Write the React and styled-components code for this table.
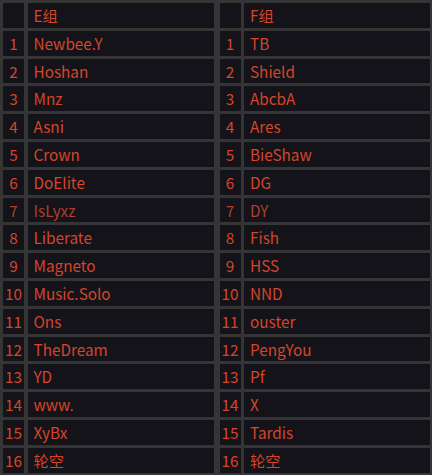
import React from 'react';
import styled, { createGlobalStyle } from 'styled-components';

const GlobalStyle = createGlobalStyle`
  html, body {
    margin: 0;
    padding: 0;
    background: #353535;
  }
  body {
    font-family: "Noto Sans CJK SC", "Noto Sans", sans-serif;
  }
`;

const groups = [
  {
    title: 'E组',
    teams: ['Newbee.Y', 'Hoshan', 'Mnz', 'Asni', 'Crown', 'DoElite', 'IsLyxz', 'Liberate',
      'Magneto', 'Music.Solo', 'Ons', 'TheDream', 'YD', 'www.', 'XyBx', '轮空'],
  },
  {
    title: 'F组',
    teams: ['TB', 'Shield', 'AbcbA', 'Ares', 'BieShaw', 'DG', 'DY', 'Fish',
      'HSS', 'NND', 'ouster', 'PengYou', 'Pf', 'X', 'Tardis', '轮空'],
  },
];

// row 7 is printed in a dimmer red in both groups
const dimRows = [7];

const Board = styled.div`
  display: flex;
  gap: 6px;
  padding: 3px 2px 3px 3px;
  width: 432px;
  height: 475px;
  box-sizing: border-box;
  overflow: hidden;
`;

const Table = styled.div`
  flex: 1;
  display: grid;
  grid-template-columns: 21px 1fr;
  grid-auto-rows: 24.8px;
  column-gap: 3.5px;
  row-gap: 3px;
`;

const Cell = styled.div`
  background: #141319;
  color: ${p => (p.$dim ? '#ad3f2b' : '#d5452a')};
  font-size: 15.3px;
  line-height: 25.5px;
  white-space: nowrap;
  overflow: hidden;
`;

const NumCell = styled(Cell)`
  text-align: center;
`;

const NameCell = styled(Cell)`
  padding-left: 6px;
`;

const Group = ({ title, teams }) => (
  <Table>
    <NumCell />
    <NameCell>{title}</NameCell>
    {teams.map((t, i) => {
      const dim = dimRows.includes(i + 1);
      return (
        <React.Fragment key={i}>
          <NumCell $dim={dim}>{i + 1}</NumCell>
          <NameCell $dim={dim}>{t}</NameCell>
        </React.Fragment>
      );
    })}
  </Table>
);

const App = () => (
  <>
    <GlobalStyle />
    <Board>
      {groups.map(g => <Group key={g.title} {...g} />)}
    </Board>
  </>
);

export default App;
